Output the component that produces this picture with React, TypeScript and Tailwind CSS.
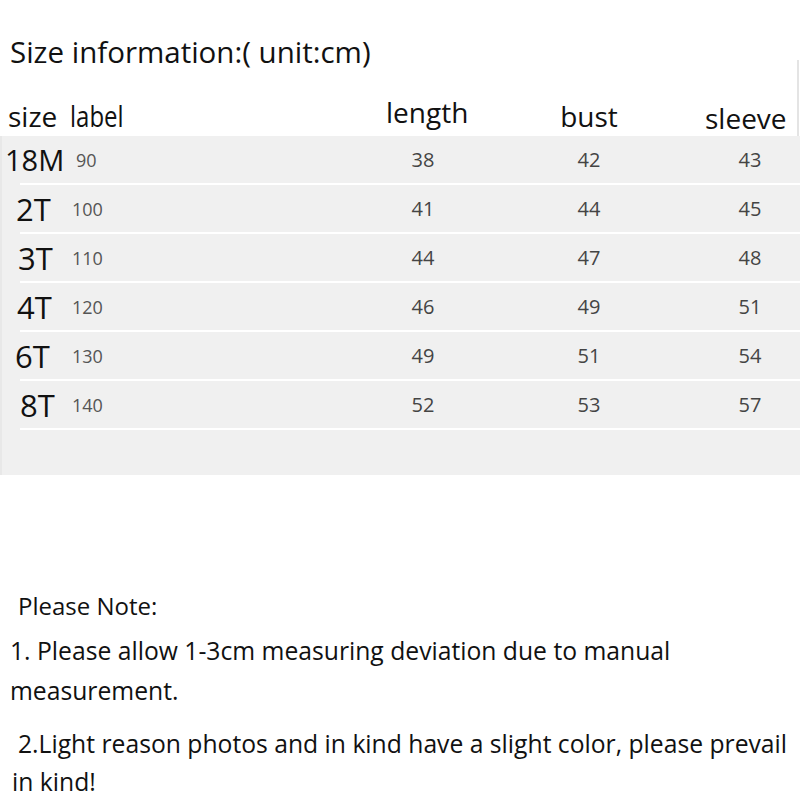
import React from "react";

const rows = [
  { size: "18M", label: "90", pl: 5, lpl: 4, fs: 29, v: ["38", "42", "43"] },
  { size: "2T", label: "100", pl: 16, lpl: 0, fs: 31, v: ["41", "44", "45"] },
  { size: "3T", label: "110", pl: 18, lpl: 0, fs: 31, v: ["44", "47", "48"] },
  { size: "4T", label: "120", pl: 17, lpl: 0, fs: 31, v: ["46", "49", "51"] },
  { size: "6T", label: "130", pl: 15, lpl: 0, fs: 31, v: ["49", "51", "54"] },
  { size: "8T", label: "140", pl: 20, lpl: 0, fs: 31, v: ["52", "53", "57"] },
];

export default function App() {
  return (
    <div
      className="relative w-[800px] h-[800px] bg-white overflow-hidden text-black"
      style={{ fontFamily: '"Open Sans", "Noto Sans", sans-serif' }}
    >
      <div className="pt-[32px] pl-[10px] h-[80px] text-[29.5px] leading-[40px] text-[#111]">
        Size information:( unit:cm)
      </div>

      {/* header */}
      <div className="flex h-[56px] items-end pb-[2px] text-[28px] leading-[36px] text-[#111]">
        <div className="w-[70px] pl-[8px]">size</div>
        <div className="w-[303px]">
          <span className="inline-block origin-left scale-x-[0.8] text-[30px]">label</span>
        </div>
        <div className="w-[100px] pl-[13px] mb-[4px] whitespace-nowrap">length</div>
        <div className="w-[232px] text-center">bust</div>
        <div className="flex-1 pl-[0px] -mb-[2px]">sleeve</div>
      </div>

      {/* table */}
      <div className="bg-[#f0f0f0] h-[339px] border-l-2 border-[#e8e8e8]">
        {rows.map((r) => (
          <div key={r.size}>
            <div className="flex h-[47px] items-center">
              <div
                className="w-[70px] leading-[40px] text-[#111]"
                style={{ paddingLeft: r.pl - 2, fontSize: r.fs }}
              >
                {r.size}
              </div>
              <div
                className="w-[301px] text-[18px] leading-[24px] text-[#555]"
                style={{ paddingLeft: r.lpl }}
              >
                {r.label}
              </div>
              <div className="w-[100px] text-center text-[20px] leading-[28px] text-[#444]">
                {r.v[0]}
              </div>
              <div className="w-[232px] text-center text-[20px] leading-[28px] text-[#444]">
                {r.v[1]}
              </div>
              <div className="w-[90px] text-center text-[20px] leading-[28px] text-[#444]">
                {r.v[2]}
              </div>
            </div>
            <div className="ml-[18px] h-[2px] bg-white" />
          </div>
        ))}
      </div>

      {/* notes */}
      <div className="pt-[111px] text-[#111]">
        <div className="pl-[18px] text-[24px] leading-[40px]">Please Note:</div>
        <div className="pl-[10px] text-[24.7px] leading-[44px] mt-[3px] whitespace-nowrap">
          1. Please allow 1-3cm measuring deviation due to manual
        </div>
        <div className="pl-[10px] text-[24.7px] leading-[36px]">measurement.</div>
        <div className="pl-[18px] text-[24.7px] leading-[48px] mt-[11px] whitespace-nowrap">
          2.Light reason photos and in kind have a slight color, please prevail
        </div>
        <div className="pl-[12px] text-[24.7px] leading-[28px]">in kind!</div>
      </div>

      <div className="absolute left-[797px] top-[60px] w-[2px] h-[76px] bg-[#e4e4e4]" />
    </div>
  );
}
